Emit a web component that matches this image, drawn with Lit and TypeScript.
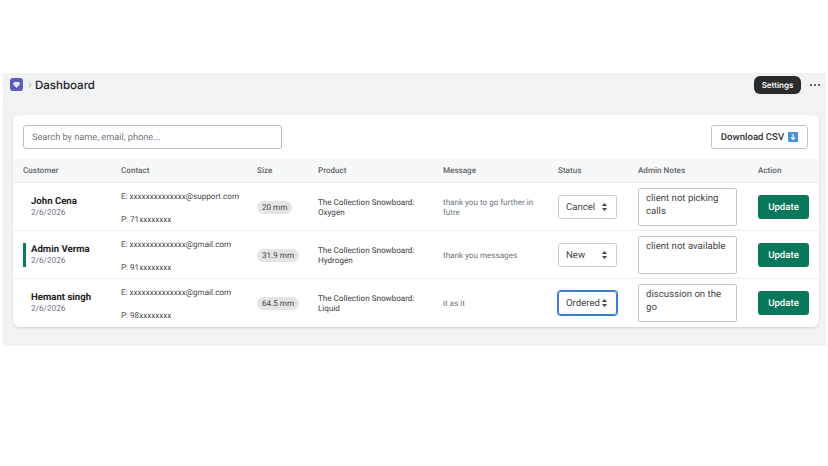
import { LitElement, html, css } from 'lit';
import { customElement } from 'lit/decorators.js';

const rows = [
  { name: 'John Cena', date: '2/6/2026', email: 'E: xxxxxxxxxxxxxx@support.com', phone: 'P: 71xxxxxxxx', size: '20 mm', product: 'The Collection Snowboard: Oxygen', message: 'thank you to go further in futre', status: 'Cancel', notes: 'client not picking calls', marked: false, focused: false },
  { name: 'Admin Verma', date: '2/6/2026', email: 'E: xxxxxxxxxxxxxx@gmail.com', phone: 'P: 91xxxxxxxx', size: '31.9 mm', product: 'The Collection Snowboard: Hydrogen', message: 'thank you messages', status: 'New', notes: 'client not available', marked: true, focused: false },
  { name: 'Hemant singh', date: '2/6/2026', email: 'E: xxxxxxxxxxxxxx@gmail.com', phone: 'P: 98xxxxxxxx', size: '64.5 mm', product: 'The Collection Snowboard: Liquid', message: 'it as it', status: 'Ordered', notes: 'discussion on the go', marked: false, focused: true },
];

@customElement('app-root')
export class AppRoot extends LitElement {
  static styles = css`
    :host {
      display: block;
      height: 466px;
      padding: 73px 2px 0 3px;
      box-sizing: border-box;
      background: #fff;
      font-family: Roboto, "Noto Sans", sans-serif;
      text-rendering: geometricPrecision;
      color: #303030;
    }
    .frame {
      height: 273px;
      background: #f1f2f4;
    }
    .topbar {
      height: 28px;
      display: flex;
      align-items: center;
      padding: 0 6px 4px 7px;
      border-bottom: 1px dotted #e9eaec;
      box-sizing: border-box;
    }
    .logo {
      width: 13px;
      height: 13px;
      border-radius: 3px;
      background: #5c5fb0;
      display: flex;
      align-items: center;
      justify-content: center;
    }
    .crumb {
      margin: 0 3px 0 5px;
      color: #8a8a8a;
      display: flex;
    }
    .title {
      font-family: Inter, sans-serif;
      font-size: 11.5px;
      font-weight: 500;
      color: #222;
    }
    .settings {
      margin-left: auto;
      height: 18px;
      width: 47px;
      border-radius: 6px;
      background: #2b2b2b;
      color: #fff;
      font-family: Inter, sans-serif;
      font-size: 8px;
      font-weight: 600;
      display: flex;
      align-items: center;
      justify-content: center;
    }
    .dots {
      margin-left: 9px;
      width: 10px;
      display: flex;
      justify-content: space-between;
    }
    .dots i {
      width: 2px;
      height: 2px;
      border-radius: 50%;
      background: #333;
    }
    .card {
      margin: 14px 7px 0 10px;
      height: 212px;
      background: #fff;
      border-radius: 7px;
      box-shadow: 0 1px 2px rgba(0, 0, 0, 0.14);
      overflow: hidden;
    }
    .toolbar {
      height: 44px;
      display: flex;
      align-items: center;
      justify-content: space-between;
      padding: 0 11px 0 10px;
      box-sizing: border-box;
    }
    .search {
      width: 259px;
      height: 24px;
      box-sizing: border-box;
      border: 1px solid #b9bcc0;
      border-radius: 3px;
      padding-left: 8px;
      font-size: 9.2px;
      color: #6f7780;
      display: flex;
      align-items: center;
    }
    .download {
      width: 97px;
      height: 24px;
      box-sizing: border-box;
      border: 1px solid #c4c6c9;
      border-radius: 3px;
      font-size: 9.6px;
      font-weight: 500;
      color: #333;
      display: flex;
      align-items: center;
      justify-content: center;
      gap: 4px;
    }
    .row {
      display: grid;
      grid-template-columns: 98px 136px 61px 125px 115px 80px 120px 1fr;
      padding-left: 10px;
      align-items: center;
    }
    .head {
      height: 24px;
      padding-bottom: 1px;
      background: #f7f8f8;
      font-size: 8.1px;
      font-weight: 500;
      color: #5e646b;
      border-bottom: 1px solid #eeeff0;
      box-sizing: border-box;
    }
    .item {
      height: 48px;
      box-sizing: border-box;
      border-bottom: 1px solid #eeeff0;
    }
    .item:last-child {
      border-bottom: none;
    }
    .customer {
      height: 24px;
      display: flex;
      flex-direction: column;
      justify-content: center;
      border-left: 3px solid transparent;
      padding-left: 5px;
    }
    .customer.marked {
      border-left-color: #0a7a5c;
    }
    .name {
      font-size: 9.6px;
      font-weight: 700;
      line-height: 12px;
      color: #222;
      white-space: nowrap;
    }
    .date {
      font-size: 8.2px;
      line-height: 11px;
      color: #6f7780;
    }
    .contact {
      height: 48px;
      display: flex;
      flex-direction: column;
      justify-content: space-between;
      padding: 8px 0 7px;
      box-sizing: border-box;
      font-size: 8.1px;
      line-height: 10px;
      color: #444;
      white-space: nowrap;
    }
    .pill {
      justify-self: start;
      background: #e3e4e6;
      border-radius: 7px;
      height: 13px;
      padding: 0 5px;
      font-size: 8.1px;
      line-height: 13px;
      color: #444;
    }
    .product {
      font-size: 8.1px;
      line-height: 10.5px;
      color: #3c3c3c;
      max-width: 112px;
    }
    .message {
      font-size: 8.1px;
      line-height: 10.5px;
      color: #6a737c;
      max-width: 95px;
    }
    .select {
      width: 59px;
      height: 24px;
      box-sizing: border-box;
      border: 1px solid #c9cbce;
      border-radius: 3px;
      display: flex;
      align-items: center;
      justify-content: space-between;
      padding: 0 9px 0 7px;
      font-size: 9.6px;
      color: #444;
    }
    .select.focused {
      border: 1px solid #3d7dc8;
      box-shadow: 0 0 0 1px #3d7dc8;
    }
    .notes {
      width: 99px;
      height: 38px;
      box-sizing: border-box;
      border: 1px solid #c4c6c9;
      border-radius: 2px;
      padding: 3px 4px 3px 7px;
      font-size: 9.6px;
      line-height: 13px;
      color: #444;
    }
    .update {
      width: 51px;
      height: 24px;
      border-radius: 3px;
      background: #08775a;
      color: #fff;
      font-size: 9.6px;
      font-weight: 500;
      display: flex;
      align-items: center;
      justify-content: center;
    }
  `;

  render() {
    return html`
      <div class="frame">
        <div class="topbar">
          <span class="logo">
            <svg width="7" height="6" viewBox="0 0 8 7"><path d="M1 0h6l1 2.5L4 7 0 2.5z" fill="#dfe6f5"/></svg>
          </span>
          <span class="crumb">
            <svg width="4" height="6" viewBox="0 0 5 8"><path d="M1 1l3 3-3 3" fill="none" stroke="currentColor" stroke-width="1"/></svg>
          </span>
          <span class="title">Dashboard</span>
          <span class="settings">Settings</span>
          <span class="dots"><i></i><i></i><i></i></span>
        </div>
        <div class="card">
          <div class="toolbar">
            <div class="search">Search by name, email, phone...</div>
            <div class="download">
              Download CSV
              <svg width="10" height="10" viewBox="0 0 9 9"><rect width="9" height="9" rx="1" fill="#4a8fdc"/><path d="M4.5 1.5v5M2.6 4.8l1.9 1.9 1.9-1.9" fill="none" stroke="#fff" stroke-width="1"/></svg>
            </div>
          </div>
          <div class="row head">
            <span>Customer</span><span>Contact</span><span>Size</span><span>Product</span>
            <span>Message</span><span>Status</span><span>Admin Notes</span><span>Action</span>
          </div>
          ${rows.map((r) => html`
            <div class="row item">
              <div class="customer ${r.marked ? 'marked' : ''}">
                <span class="name">${r.name}</span>
                <span class="date">${r.date}</span>
              </div>
              <div class="contact"><span>${r.email}</span><span>${r.phone}</span></div>
              <span class="pill">${r.size}</span>
              <span class="product">${r.product}</span>
              <span class="message">${r.message}</span>
              <div class="select ${r.focused ? 'focused' : ''}">
                ${r.status}
                <svg width="5" height="8" viewBox="0 0 5 8"><path d="M2.5 0L5 3H0zM2.5 8L0 5h5z" fill="#444"/></svg>
              </div>
              <div class="notes">${r.notes}</div>
              <div class="update">Update</div>
            </div>
          `)}
        </div>
      </div>
    `;
  }
}
